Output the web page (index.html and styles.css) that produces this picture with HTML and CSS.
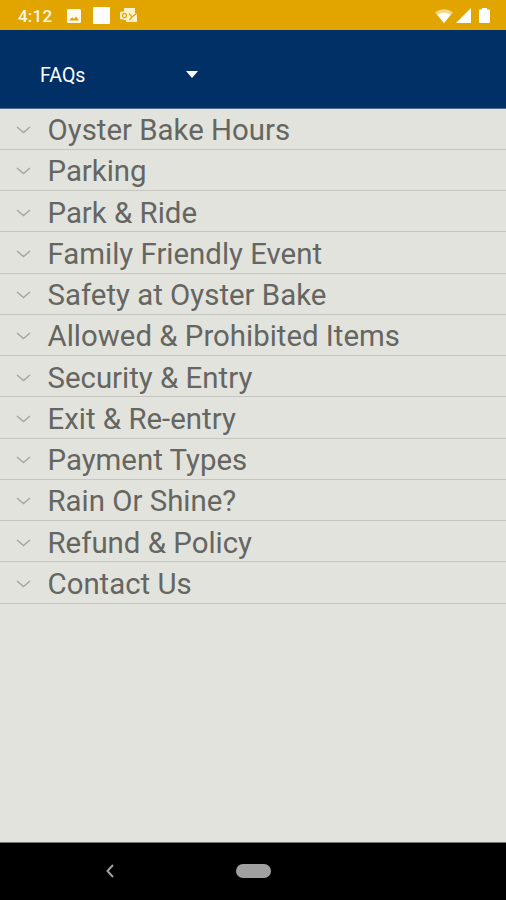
FILE: index.html
```
<!DOCTYPE html>
<html lang="en">
<head>
  <meta charset="UTF-8" />
  <meta name="viewport" content="width=device-width, initial-scale=1.0" />
  <title>FAQs</title>
  <link rel="stylesheet" href="styles.css">
</head>
<body>

  <div class="status-bar">
    <span class="clock">4:12</span>
    <svg class="icon-photo" width="14" height="14" viewBox="0 0 14 14">
      <path fill="#fffaf0" fill-rule="evenodd" d="M1.500 0h11A1.500 1.500 0 0 1 14 1.500v11a1.500 1.500 0 0 1-1.500 1.500h-11A1.500 1.500 0 0 1 0 12.500v-11A1.500 1.500 0 0 1 1.500 0zM2 11.500h10L9 7.500l-2 2.400-1.800-1.600z"/>
    </svg>
    <span class="icon-square"></span>
    <svg class="icon-mail" width="18" height="15" viewBox="0 0 18 15">
      <path fill="#fdf0cf" d="M4 0h11v5h2v9H6v-2H4z"/>
      <path fill="#fdf0cf" d="M0 4l9-1.500v10L0 11z"/>
      <ellipse cx="4.500" cy="7.500" rx="2" ry="2.200" fill="none" stroke="#e2a500" stroke-width="1.200"/>
      <path fill="none" stroke="#e2a500" stroke-width="1.200" d="M9 5.500l3 3.500 5-4M9.500 12l2.500-3"/>
    </svg>
    <div class="signals">
      <svg width="18" height="14" viewBox="0 0 18 14">
        <path fill="#f6d889" d="M0 3.500Q9-3 18 3.500L9 14z"/>
        <path fill="#fff" d="M2.500 5.800Q9 1.500 15.500 5.800L9 14z"/>
      </svg>
      <svg width="15" height="15" viewBox="0 0 15 15">
        <path fill="#fff" d="M15 0v15H0z"/>
      </svg>
      <svg class="icon-battery" width="11" height="15" viewBox="0 0 11 15">
        <path fill="#fff" d="M3 0h5v1.500h2q1 0 1 1V14q0 1-1 1H1q-1 0-1-1V2.500q0-1 1-1h2z"/>
      </svg>
    </div>
  </div>

  <header>
    <span class="page-name">FAQs</span>
    <svg width="12" height="7" viewBox="0 0 12 7"><path fill="#fff" d="M0 0h12L6 7z"/></svg>
  </header>

  <ul class="faq-list">
    <li><svg class="chevron" viewBox="0 0 15 8"><path d="M1 1l6.500 5.500L14 1"/></svg>Oyster Bake Hours</li>
    <li><svg class="chevron" viewBox="0 0 15 8"><path d="M1 1l6.500 5.500L14 1"/></svg>Parking</li>
    <li><svg class="chevron" viewBox="0 0 15 8"><path d="M1 1l6.500 5.500L14 1"/></svg>Park &amp; Ride</li>
    <li><svg class="chevron" viewBox="0 0 15 8"><path d="M1 1l6.500 5.500L14 1"/></svg>Family Friendly Event</li>
    <li><svg class="chevron" viewBox="0 0 15 8"><path d="M1 1l6.500 5.500L14 1"/></svg>Safety at Oyster Bake</li>
    <li><svg class="chevron" viewBox="0 0 15 8"><path d="M1 1l6.500 5.500L14 1"/></svg>Allowed &amp; Prohibited Items</li>
    <li><svg class="chevron" viewBox="0 0 15 8"><path d="M1 1l6.500 5.500L14 1"/></svg>Security &amp; Entry</li>
    <li><svg class="chevron" viewBox="0 0 15 8"><path d="M1 1l6.500 5.500L14 1"/></svg>Exit &amp; Re-entry</li>
    <li><svg class="chevron" viewBox="0 0 15 8"><path d="M1 1l6.500 5.500L14 1"/></svg>Payment Types</li>
    <li><svg class="chevron" viewBox="0 0 15 8"><path d="M1 1l6.500 5.500L14 1"/></svg>Rain Or Shine?</li>
    <li><svg class="chevron" viewBox="0 0 15 8"><path d="M1 1l6.500 5.500L14 1"/></svg>Refund &amp; Policy</li>
    <li><svg class="chevron" viewBox="0 0 15 8"><path d="M1 1l6.500 5.500L14 1"/></svg>Contact Us</li>
  </ul>

  <footer class="nav-bar">
    <svg width="8" height="14" viewBox="0 0 8 14"><path fill="none" stroke="#a0a0a0" stroke-width="2" d="M7 1L1.500 7 7 13"/></svg>
    <span class="home-pill"></span>
  </footer>

</body>
</html>
```
FILE: styles.css
```
body {
  margin: 0;
  height: 100vh;
  display: flex;
  flex-direction: column;
  background-color: #e2e3dd;
  font-family: Roboto, sans-serif;
  overflow: hidden;
}

.status-bar {
  height: 30px;
  box-sizing: border-box;
  padding: 1px 16px 0 18px;
  display: flex;
  align-items: center;
  background-color: #e2a500;
  color: #fff8e8;
}

.clock {
  width: 49px;
  font-size: 17px;
  font-weight: 500;
  letter-spacing: 0.2px;
}

.icon-square {
  width: 17px;
  height: 17px;
  margin: 0 10px 0 12px;
  border-radius: 1px;
  background-color: #fff;
}

.signals {
  margin-left: auto;
  display: flex;
  align-items: center;
  gap: 3px;
}

.icon-battery {
  margin-left: 5px;
}

header {
  height: 78.5px;
  box-sizing: border-box;
  padding: 11px 0 0 40px;
  display: flex;
  align-items: center;
  background-color: #003066;
  border-bottom: 1px solid #4f6b88;
  color: #fff;
}

.page-name {
  width: 146px;
  padding-top: 2px;
  font-size: 19.6px;
}

.faq-list {
  flex: 1;
  margin: 0;
  padding: 0;
  list-style: none;
  color: #656662;
  font-size: 29.4px;
  font-weight: 400;
}

.faq-list li {
  height: 41.25px;
  box-sizing: border-box;
  padding: 3px 0 0 16px;
  display: flex;
  align-items: center;
  border-bottom: 1px solid #c5c6c0;
}

.chevron {
  width: 15px;
  height: 8px;
  margin-right: 16.5px;
}

.chevron path {
  fill: none;
  stroke: #a6a7a2;
  stroke-width: 1.5;
}

.nav-bar {
  height: 58.5px;
  box-sizing: border-box;
  padding-left: 106px;
  display: flex;
  align-items: center;
  background-color: #000;
  border-top: 1px solid #777;
}

.home-pill {
  width: 35px;
  height: 14px;
  margin-left: 122px;
  border-radius: 7px;
  background-color: #a0a0a0;
}
```
